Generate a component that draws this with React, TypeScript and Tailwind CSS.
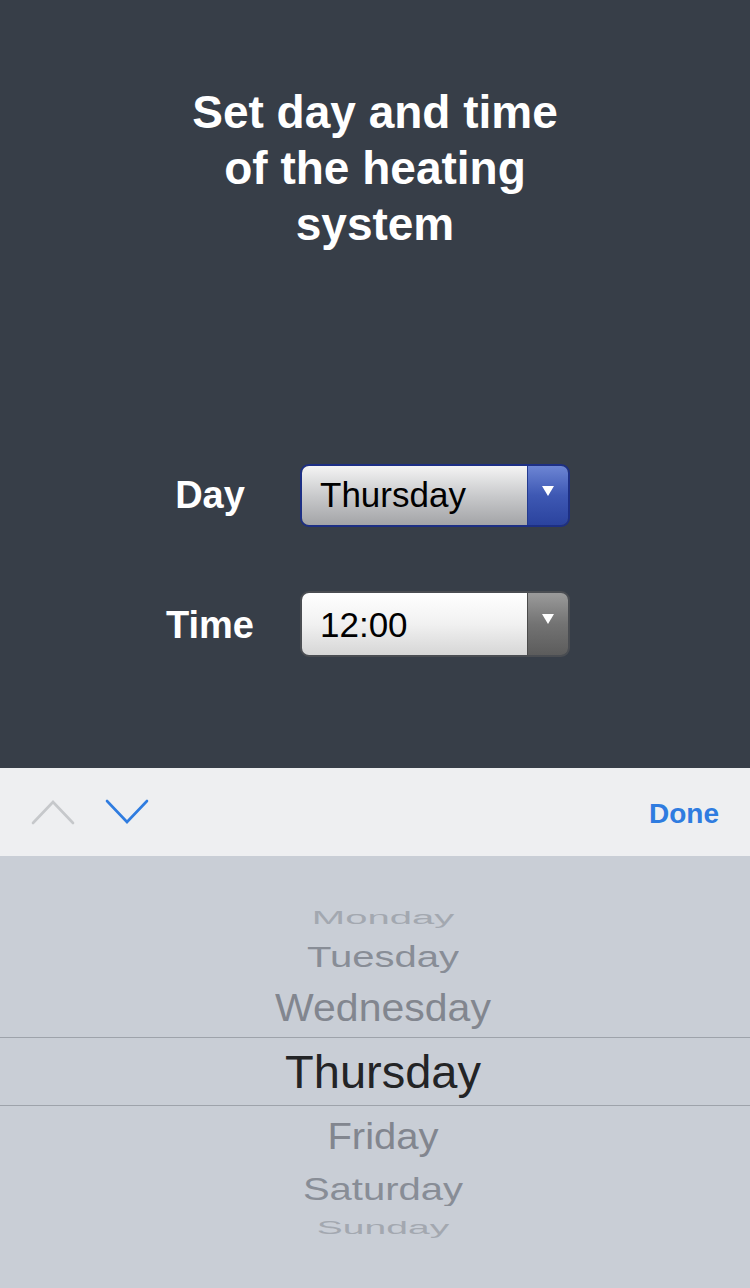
import React from "react"

const font = { fontFamily: '"Liberation Sans", Arial, sans-serif' }

const Arrow: React.FC = () => (
  <svg width="14" height="12" viewBox="0 0 14 12">
    <path d="M1 1 L13 1 L7 11 Z" fill="#ffffff" />
  </svg>
)

const Chevron: React.FC<{ up?: boolean; color: string }> = ({ up, color }) => (
  <svg width="44" height="26" viewBox="0 0 44 26">
    <path
      d={up ? "M2 24 L22 3 L42 24" : "M2 2 L22 23 L42 2"}
      fill="none"
      stroke={color}
      strokeWidth="2.6"
      strokeLinecap="round"
      strokeLinejoin="miter"
    />
  </svg>
)

const App: React.FC = () => {
  return (
    <div className="w-[750px] h-[1288px] flex flex-col overflow-hidden" style={font}>
      {/* Top panel */}
      <div className="h-[768px] bg-[#373e48] flex flex-col items-center">
        <h1 className="pt-[84px] text-white font-bold text-[46px] leading-[56px] text-center">
          Set day and time
          <br />
          of the heating
          <br />
          system
        </h1>

        <div className="mt-[212px] w-full flex flex-col pl-[140px]">
          {/* Day row */}
          <div className="flex items-center">
            <div className="w-[140px] text-center text-white font-bold text-[38px]">Day</div>
            <div className="ml-[20px] w-[270px] h-[63px] flex rounded-[9px] border-2 border-[#1d2f84] overflow-hidden">
              <div className="flex-1 flex items-center pl-[18px] text-[35px] text-black bg-gradient-to-b from-[#f4f4f4] via-[#c9cacc] to-[#a3a4a7]">
                Thursday
              </div>
              <div className="w-[41px] flex justify-center pt-[19px] border-l border-[#233a8e] bg-gradient-to-b from-[#6d85d4] via-[#3e58b3] to-[#2b439e]">
                <Arrow />
              </div>
            </div>
          </div>

          {/* Time row */}
          <div className="flex items-center mt-[64px]">
            <div className="w-[140px] text-center text-white font-bold text-[38px] pt-[3px]">Time</div>
            <div className="ml-[20px] w-[270px] h-[66px] flex rounded-[9px] border-2 border-[#4a4d52] overflow-hidden">
              <div className="flex-1 flex items-center pl-[18px] pt-[2px] text-[35px] text-black bg-gradient-to-b from-[#ffffff] via-[#f1f1f1] to-[#d6d6d6]">
                12:00
              </div>
              <div className="w-[41px] flex justify-center pt-[20px] border-l border-[#4a4a4a] bg-gradient-to-b from-[#9b9b9b] via-[#737373] to-[#5c5c5c]">
                <Arrow />
              </div>
            </div>
          </div>
        </div>
      </div>

      {/* Toolbar */}
      <div className="h-[88px] bg-[#eeeff1] flex items-center px-[31px]">
        <Chevron up color="#c6c8cb" />
        <div className="ml-[30px]">
          <Chevron color="#2f7ce0" />
        </div>
        <div className="ml-auto text-[28px] font-bold text-[#2f7ce0] pt-[3px]">Done</div>
      </div>

      {/* Picker */}
      <div className="flex-1 bg-[#c9ced6] flex flex-col pt-[46px] text-center">
        <div className="h-[30px] flex items-center justify-center pl-[16px]">
          <span className="text-[40px] text-[#a3a8b0] scale-y-[0.48] leading-none">Monday</span>
        </div>
        <div className="h-[48px] flex items-center justify-center pl-[16px]">
          <span className="text-[40px] text-[#888d96] scale-y-[0.75] leading-none">Tuesday</span>
        </div>
        <div className="h-[57px] flex items-center justify-center pl-[16px]">
          <span className="text-[41px] text-[#82868f] scale-y-[0.95] leading-none">Wednesday</span>
        </div>
        <div className="h-[69px] flex items-center justify-center pl-[16px] border-y-[1.5px] border-[#9ea3ab]">
          <span className="text-[47px] text-[#232426] leading-none">Thursday</span>
        </div>
        <div className="h-[60px] flex items-center justify-center pl-[16px]">
          <span className="text-[40px] text-[#82868f] scale-y-[0.94] leading-none">Friday</span>
        </div>
        <div className="h-[46px] flex items-center justify-center pl-[16px]">
          <span className="text-[40px] text-[#888d96] scale-y-[0.77] leading-none">Saturday</span>
        </div>
        <div className="h-[30px] flex items-center justify-center pl-[16px]">
          <span className="text-[39px] text-[#a3a8b0] scale-y-[0.47] leading-none">Sunday</span>
        </div>
      </div>
    </div>
  )
}

export default App
